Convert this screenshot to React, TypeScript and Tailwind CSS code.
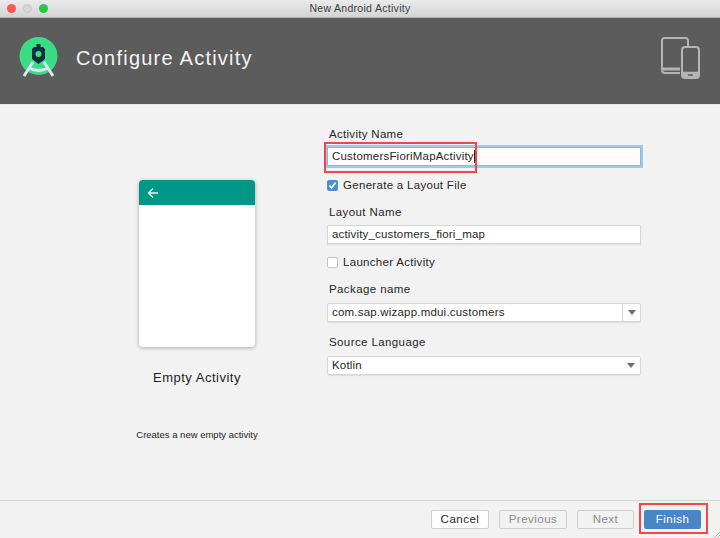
import React from "react";

function StudioLogo() {
	return (
		<svg width="40" height="42" viewBox="0 0 40 42">
			<circle cx="19.5" cy="19" r="19" fill="#3ddc84"/>
			<path d="M17.5 7h4v3h2.5l2 2v10l-6.5 5-6.5-5V12l2-2h2.500z" fill="#073042"/>
			<circle cx="19.500" cy="17" r="3" fill="#3ddc84"/>
			<path d="M14 25 5 39M25 25l9 14M10 31c6 3 13 3 19 0" fill="none" stroke="#d7e8f5" strokeWidth="3"/>
		</svg>
	);
}

function DevicesIcon() {
	return (
		<svg width="42" height="42" viewBox="0 0 42 42" fill="none" stroke="#b4b4b4" strokeWidth="2">
			<path d="M20 36H5a3 3 0 0 1-3-3V3.500a2.500 2.500 0 0 1 2.500-2.500h21A2.500 2.500 0 0 1 28 3.500V9"/>
			<path d="M2 32h18" strokeWidth="3"/>
			<rect x="22" y="10" width="17" height="31" rx="3"/>
			<path d="M22 35.500h17" strokeWidth="1.500"/>
			<path d="M22 38h17" strokeWidth="4"/>
			<path d="M28 38h5" strokeWidth="1.500" stroke="#5c5c5c"/>
		</svg>
	);
}

function Field({label, value}: {label: string; value: string}) {
	return (
		<div className="flex flex-col">
			<span className="pl-[2px] text-[11.500px] leading-[14px] tracking-[0.4px] text-[#262626]">{label}</span>
			<div className="mt-[6px] flex h-[19px] w-[314px] items-center border border-[#d6d6d6] bg-white pl-[4px] text-[11.500px] tracking-[0.17px] text-[#262626] shadow-[0_1px_1px_rgba(0,0,0,0.08)]">
				{value}
			</div>
		</div>
	);
}

function Combo({label, value, split}: {label: string; value: string; split?: boolean}) {
	return (
		<div className="flex flex-col">
			<span className="pl-[2px] text-[11.500px] leading-[14px] tracking-[0.4px] text-[#262626]">{label}</span>
			<div className="mt-[7px] flex h-[19px] w-[314px] items-center rounded-[2px] border border-[#d6d6d6] bg-white pl-[4px] text-[11.500px] tracking-[0.2px] text-[#262626] shadow-[0_1px_1px_rgba(0,0,0,0.08)]">
				<span className="flex-1">{value}</span>
				<div className={split ? "flex h-full w-[18px] items-center justify-center border-l border-[#d6d6d6]" : "flex h-full w-[18px] items-center justify-center"}>
					<div className="h-0 w-0 border-x-[4px] border-t-[5px] border-x-transparent border-t-[#6e6e6e]"/>
				</div>
			</div>
		</div>
	);
}

function App() {
	return (
		<div className="relative flex h-[538px] w-[720px] flex-col overflow-hidden bg-[#f2f2f2] font-['Liberation_Sans',sans-serif]">
			{/* title bar */}
			<div className="relative flex h-[18px] items-center justify-center border-b border-[#b4b4b4] bg-gradient-to-b from-[#ebebeb] to-[#d4d4d4]">
				<div className="absolute left-[7px] top-[4px] flex gap-[7px]">
					<div className="h-[9px] w-[9px] rounded-full bg-[#fc5753]"/>
					<div className="h-[9px] w-[9px] rounded-full border border-[#c8c8c8] bg-[#d6d6d6]"/>
					<div className="h-[9px] w-[9px] rounded-full bg-[#28c840]"/>
				</div>
				<span className="text-[10.500px] tracking-[0.3px] text-[#3c3c3c]">New Android Activity</span>
			</div>

			{/* header */}
			<div className="flex h-[86px] items-center bg-[#5c5c5c] pb-[6px] pl-[19px] pr-[18px]">
				<StudioLogo/>
				<span className="ml-[17px] text-[20px] tracking-[1.240px] text-[#f4f4f4]">Configure Activity</span>
				<div className="ml-auto">
					<DevicesIcon/>
				</div>
			</div>

			{/* body */}
			<div className="flex flex-1 border-t border-[#e8e8e8]">
				<div className="flex w-[327px] flex-col pl-[66px]">
					<div className="flex w-[262px] flex-col items-center pt-[75px]">
						<div className="h-[167px] w-[116px] overflow-hidden rounded-[4px] bg-white shadow-[0_1px_4px_rgba(0,0,0,0.3)]">
							<div className="flex h-[25px] items-center bg-[#009688] pl-[8px]">
								<svg width="12" height="12" viewBox="0 0 12 12" fill="none" stroke="#e6f4f2" strokeWidth="1.300">
									<path d="M11 6H1.500M6 1.500 1.500 6 6 10.500"/>
								</svg>
							</div>
						</div>
						<span className="mt-[23px] text-[13px] leading-[16px] tracking-[0.5px] text-[#1e1e1e]">Empty Activity</span>
						<span className="mt-[43px] text-[9.500px] leading-[12px] tracking-[0px] text-[#1e1e1e]">Creates a new empty activity</span>
					</div>
				</div>

				<div className="flex flex-col pt-[22px]">
					<span className="pl-[2px] text-[11.500px] leading-[14px] tracking-[0.3px] text-[#262626]">Activity Name</span>
					<div className="relative mt-[6px] flex h-[19px] w-[314px] items-center border border-[#86b8ec] bg-white pl-[4px] text-[11.500px] tracking-[0.2px] text-[#262626] shadow-[0_0_0_2px_rgba(134,184,236,0.75)]">
						CustomersFioriMapActivity<span className="h-[13px] w-px bg-[#262626]"/>
						<div className="absolute left-[-4px] top-[-6px] h-[31px] w-[153px] border-2 border-[#f4444e]"/>
					</div>
					<label className="mt-[12px] flex items-center gap-[5px] text-[11.500px] leading-[14px] tracking-[0.3px] text-[#262626]">
						<div className="flex h-[11px] w-[11px] items-center justify-center rounded-[2px] bg-[#4a90d9]">
							<svg width="9" height="9" viewBox="0 0 9 9" fill="none" stroke="white" strokeWidth="1.600">
								<path d="M1.500 4.500 3.500 7l4-5.500"/>
							</svg>
						</div>
						Generate a Layout File
					</label>
					<div className="mt-[13px]">
						<Field label="Layout Name" value="activity_customers_fiori_map"/>
					</div>
					<label className="mt-[11px] flex items-center gap-[5px] text-[11.500px] leading-[14px] tracking-[0.3px] text-[#262626]">
						<div className="h-[11px] w-[11px] rounded-[2px] border border-[#c4c4c4] bg-white"/>
						Launcher Activity
					</label>
					<div className="mt-[13px]">
						<Combo label="Package name" value="com.sap.wizapp.mdui.customers" split/>
					</div>
					<div className="mt-[13px]">
						<Combo label="Source Language" value="Kotlin"/>
					</div>
				</div>
			</div>

			{/* footer */}
			<div className="relative flex h-[38px] items-center justify-end gap-[10px] border-t border-[#d6d6d6] pr-[19px] text-[11.500px] tracking-[0.5px]">
				<button className="flex h-[19px] w-[58px] items-center justify-center rounded-[2px] border border-[#d0d0d0] bg-white text-[#262626]">Cancel</button>
				<button className="flex h-[19px] w-[68px] items-center justify-center rounded-[2px] border border-[#d0d0d0] text-[#8c8c8c]">Previous</button>
				<button className="flex h-[19px] w-[57px] items-center justify-center rounded-[2px] border border-[#d0d0d0] text-[#8c8c8c]">Next</button>
				<button className="relative flex h-[19px] w-[57px] items-center justify-center rounded-[2px] bg-[#4a86c5] text-white">
					Finish
					<div className="absolute left-[-5px] top-[-7px] h-[31px] w-[69px] border-2 border-[#f4444e]"/>
				</button>
				<svg className="absolute bottom-0 right-0" width="6" height="6" viewBox="0 0 6 6" fill="none" stroke="#b8b8b8">
					<path d="M0 6 6 0M3 6l3-3"/>
				</svg>
			</div>
		</div>
	);
}

export default App;
